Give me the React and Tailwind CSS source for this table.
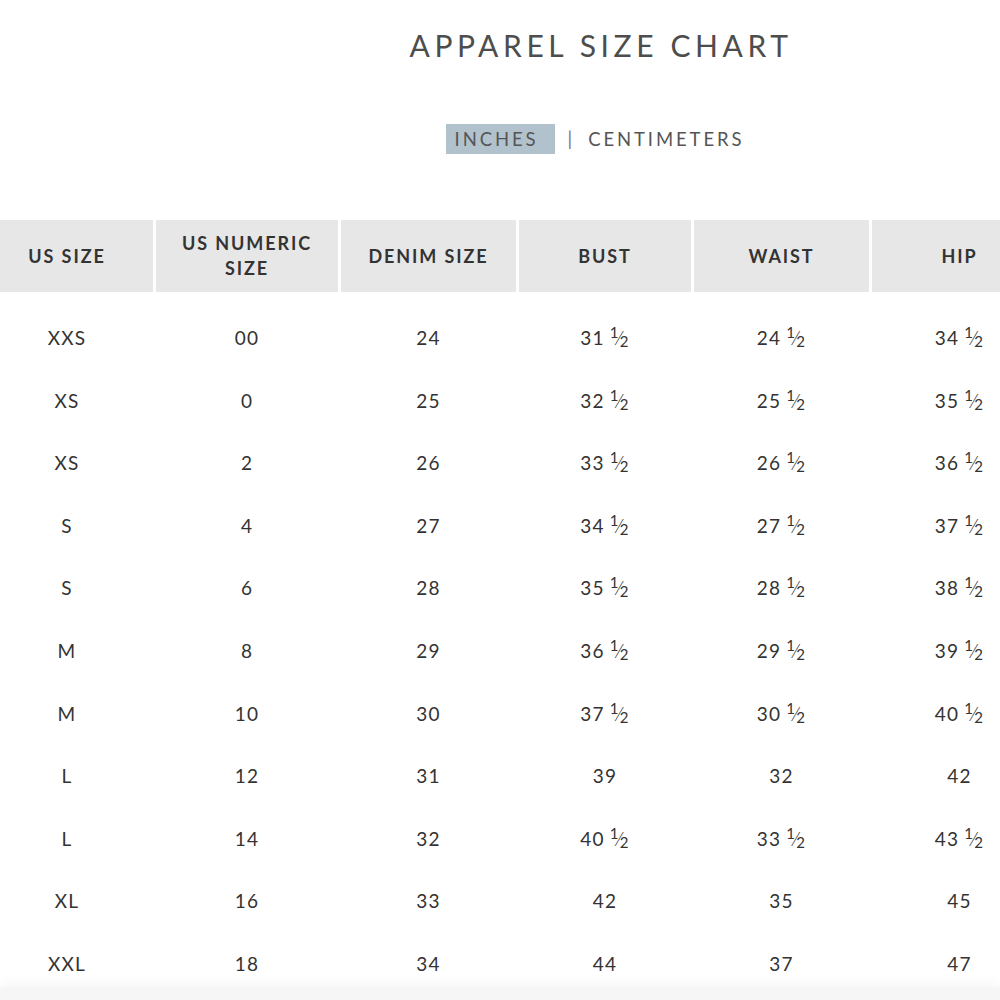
const cols = ['US SIZE', 'US NUMERIC SIZE', 'DENIM SIZE', 'BUST', 'WAIST', 'HIP']

// [us, numeric, denim, bust, waist, hip] — true in last three means "and a half"
const rows = [
  ['XXS', '00', '24', ['31', true], ['24', true], ['34', true]],
  ['XS', '0', '25', ['32', true], ['25', true], ['35', true]],
  ['XS', '2', '26', ['33', true], ['26', true], ['36', true]],
  ['S', '4', '27', ['34', true], ['27', true], ['37', true]],
  ['S', '6', '28', ['35', true], ['28', true], ['38', true]],
  ['M', '8', '29', ['36', true], ['29', true], ['39', true]],
  ['M', '10', '30', ['37', true], ['30', true], ['40', true]],
  ['L', '12', '31', ['39', false], ['32', false], ['42', false]],
  ['L', '14', '32', ['40', true], ['33', true], ['43', true]],
  ['XL', '16', '33', ['42', false], ['35', false], ['45', false]],
  ['XXL', '18', '34', ['44', false], ['37', false], ['47', false]],
]

const grid = 'grid grid-cols-[172px_182px_175px_172px_175px_175px] gap-x-[3px] w-[1064px] -ml-[19px]'

function Half() {
  return (
    <span className="inline-flex items-start ml-[5px]">
      <span className="text-[15px] leading-none relative -top-[7px]">1</span>
      <span className="text-[20px] leading-none -mx-[2px] relative -top-[5px] font-light">⁄</span>
      <span className="text-[15px] leading-none relative top-[2px]">2</span>
    </span>
  )
}

function Cell({ v }) {
  if (Array.isArray(v)) {
    return (
      <span className="inline-flex items-baseline">
        <span>{v[0]}</span>
        {v[1] && <Half />}
      </span>
    )
  }
  return <span>{v}</span>
}

export default function App() {
  return (
    <div className="min-h-screen bg-white overflow-hidden text-[#333] font-['Lato','Open_Sans',sans-serif]">
      <div className="flex justify-center pl-[202px] pt-[26px]">
        <h1 className="text-[30px] leading-[38px] tracking-[4.6px] text-[#4d4d4d] font-normal">APPAREL SIZE CHART</h1>
      </div>

      <div className="flex justify-center items-center pl-[190px] mt-[60px] text-[18.5px] tracking-[2.9px] text-[#555]">
        <span className="bg-[#b2c2cd] h-[30px] w-[109px] flex items-center pl-[9px] pt-[2px]">INCHES</span>
        <span className="mx-[13px] text-[#777] pt-[2px]">|</span>
        <span className="pt-[2px]">CENTIMETERS</span>
      </div>

      <div className={`${grid} mt-[66px]`}>
        {cols.map((c, i) => (
          <div
            key={c}
            className={`h-[72px] bg-[#e7e7e7] flex items-center justify-center text-center text-[18px] leading-[25px] font-bold tracking-[1.9px] text-[#333] ${i === 1 ? 'px-[14px]' : ''}`}
          >
            {c}
          </div>
        ))}
      </div>

      <div className="mt-[15px]">
        {rows.map((r, ri) => (
          <div key={ri} className={`${grid} h-[62.6px] items-center`}>
            {r.map((v, ci) => (
              <div key={ci} className="text-center text-[19px] tracking-[1.2px] text-[#333]">
                <Cell v={v} />
              </div>
            ))}
          </div>
        ))}
      </div>

      <div className="fixed left-0 right-0 bottom-0 h-[13px] bg-[#f6f6f6] shadow-[0_-6px_10px_rgba(0,0,0,0.03)]" />
    </div>
  )
}
